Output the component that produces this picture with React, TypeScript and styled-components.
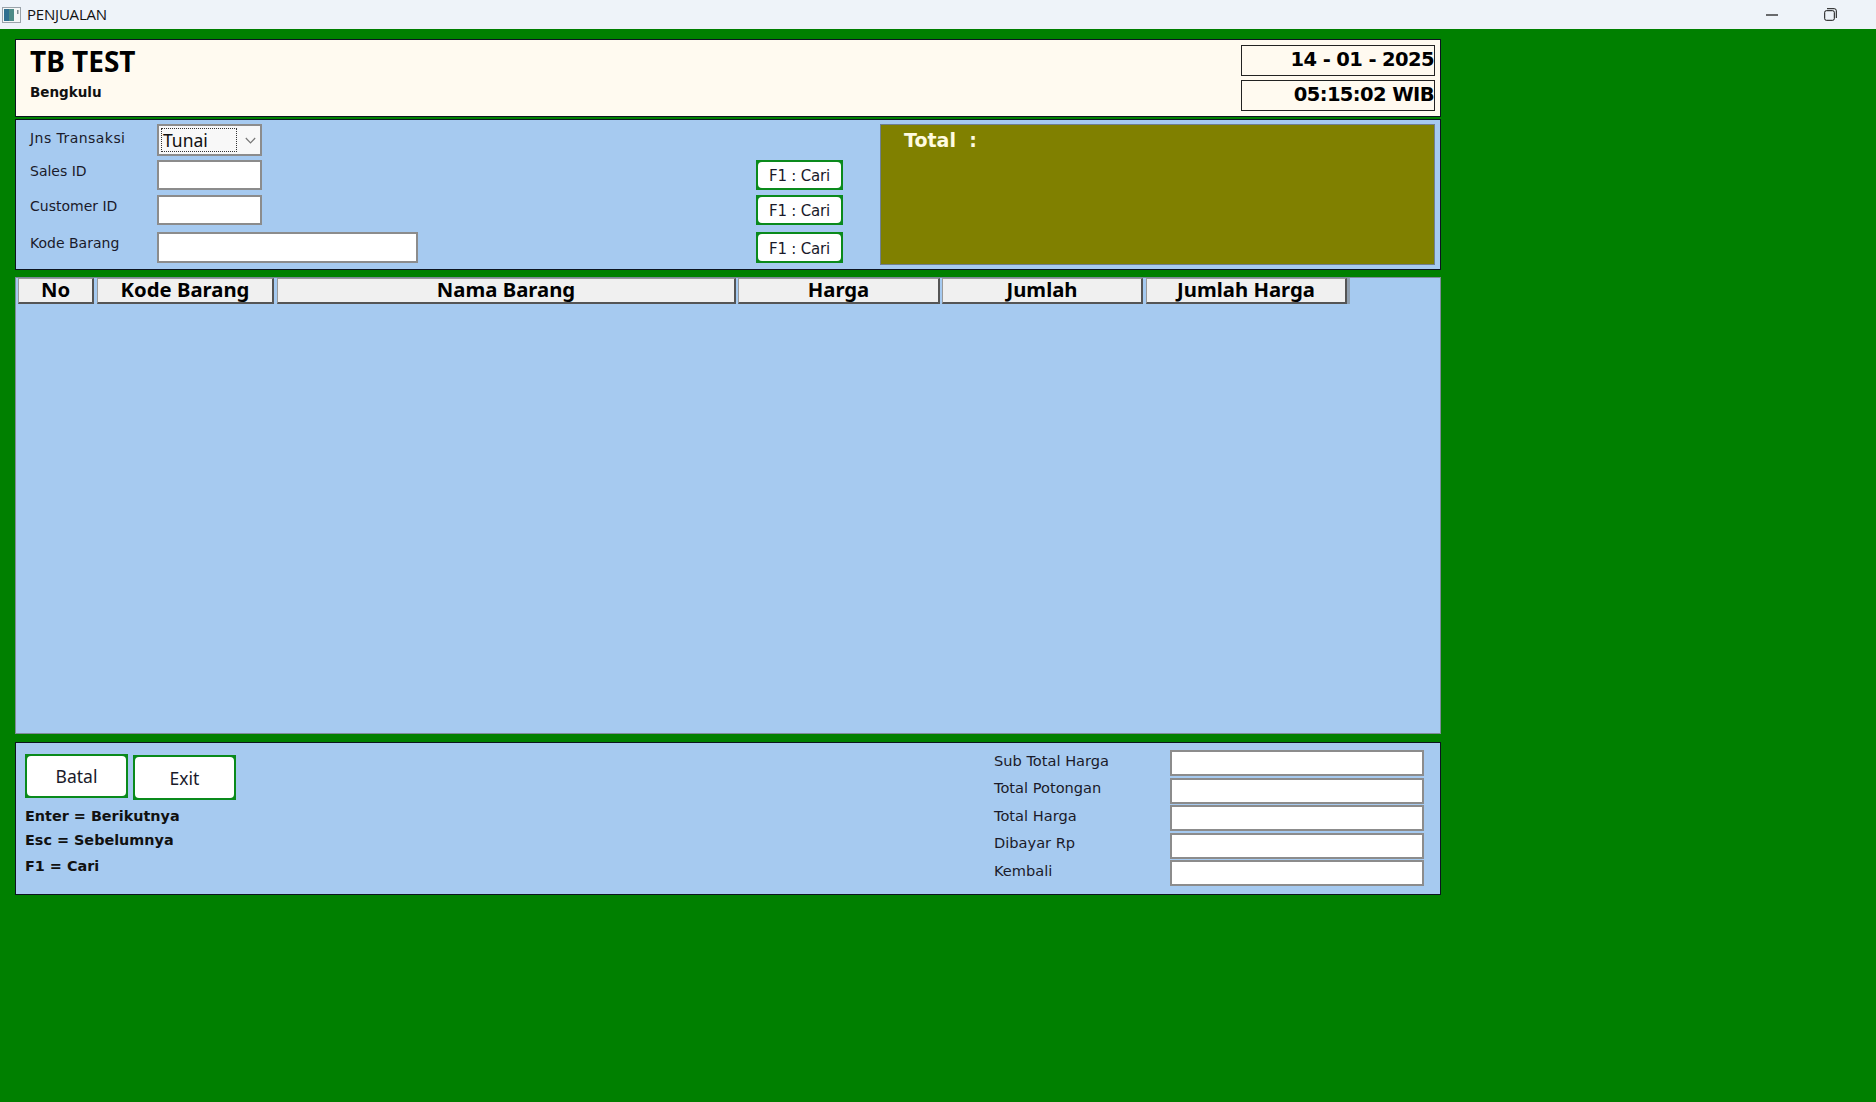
import React from "react";
import styled, { createGlobalStyle } from "styled-components";

const GREEN = "#008000";
const BLUE = "#a6caf0";
const UI = `"DejaVu Sans", Verdana, sans-serif`;

const Global = createGlobalStyle`
  html, body { margin: 0; padding: 0; height: 100%; }
  body { background: ${GREEN}; font-family: ${UI}; color: #111; overflow: hidden; }
  * { box-sizing: border-box; }
`;

const Page = styled.div`
  width: 1876px;
  height: 1102px;
  display: flex;
  flex-direction: column;
  background: ${GREEN};
`;

const TitleBar = styled.div`
  height: 29px;
  background: #eef3f9;
  display: flex;
  align-items: center;
  padding-left: 2px;
  flex: none;
`;

const TitleText = styled.span`
  font-family: "Open Sans", "Noto Sans", sans-serif;
  font-size: 15px;
  line-height: 20px;
  margin: 0 0 2px 6px;
  color: #111;
  letter-spacing: -0.2px;
`;

const WindowControls = styled.div`
  margin-left: auto;
  display: flex;
  align-items: center;
  gap: 46px;
  padding-right: 39px;
`;

const Content = styled.div`
  width: 1426px;
  margin-left: 15px;
  padding-top: 10px;
  display: flex;
  flex-direction: column;
`;

const Panel = styled.section<{ $h: number; $mt?: number; $bg?: string; $border?: string }>`
  height: ${(p) => p.$h}px;
  margin-top: ${(p) => p.$mt ?? 0}px;
  background: ${(p) => p.$bg ?? BLUE};
  border: 1px solid ${(p) => p.$border ?? "#0c1420"};
  display: flex;
`;

/* header */
const Brand = styled.div`
  padding: 3px 0 0 14px;
  flex: 1;
`;
const CompanyName = styled.div`
  font-family: "Noto Sans", sans-serif;
  font-weight: 700;
  font-size: 28px;
  line-height: 36px;
  color: #000;
`;
const CompanyCity = styled.div`
  font-weight: 700;
  font-size: 13.5px;
  line-height: 18px;
  margin-top: 4px;
  color: #111;
`;
const ClockColumn = styled.div`
  width: 194px;
  margin-right: 5px;
  padding-top: 5px;
  display: flex;
  flex-direction: column;
  gap: 4px;
`;
const ClockBox = styled.div`
  height: 31px;
  border: 1px solid #222;
  font-family: "DejaVu Sans", sans-serif;
  font-weight: 700;
  font-size: 19.5px;
  letter-spacing: -0.6px;
  display: flex;
  align-items: center;
  justify-content: flex-end;
  padding-bottom: 3px;
  color: #000;
  white-space: nowrap;
`;

/* form */
const Fields = styled.div`
  width: 827px;
  padding: 4px 0 0 14px;
  flex: none;
`;
const FieldRow = styled.div<{ $h: number; $mt?: number }>`
  height: ${(p) => p.$h}px;
  margin-top: ${(p) => p.$mt ?? 0}px;
  display: grid;
  grid-template-columns: 127px 599px 87px;
  align-items: stretch;
`;
const FieldLabel = styled.label<{ $pb?: number; $track?: number }>`
  font-size: 14px;
  letter-spacing: ${(p) => p.$track ?? 0}px;
  display: flex;
  align-items: center;
  padding-bottom: ${(p) => p.$pb ?? 6}px;
  color: #1a1a2a;
  white-space: nowrap;
`;
const TextBox = styled.input<{ $w: number }>`
  width: ${(p) => p.$w}px;
  height: 100%;
  background: #fff;
  border: 2px solid #8c8c8c;
  outline: none;
  padding: 0;
  display: block;
`;
const SelectBox = styled.div`
  width: 105px;
  height: 100%;
  background: #f8f8f8;
  border: 2px solid #8c8c8c;
  padding: 2px;
  display: flex;
  align-items: stretch;
`;
const SelectValue = styled.div`
  width: 76px;
  border: 1px dotted #333;
  font-size: 17.5px;
  font-family: "Noto Sans", sans-serif;
  line-height: 22px;
  padding-left: 1px;
  display: flex;
  align-items: center;
  color: #111;
`;
const SelectArrow = styled.div`
  flex: 1;
  display: flex;
  align-items: center;
  justify-content: center;
  padding-left: 6px;
`;
const GreenFrame = styled.button<{ $w: number; $h?: number; $mt?: number }>`
  width: ${(p) => p.$w}px;
  height: ${(p) => (p.$h ? `${p.$h}px` : "100%")};
  margin-top: ${(p) => p.$mt ?? 0}px;
  padding: 2px;
  border: 0;
  background: #0a8a1c;
  display: block;
  font-family: inherit;
`;
const ButtonFace = styled.span`
  width: 100%;
  height: 100%;
  background: #fff;
  border-radius: 4px;
  display: flex;
  align-items: center;
  justify-content: center;
  padding-top: 2px;
  font-size: 15px;
  letter-spacing: -0.2px;
  color: #1a1a2a;
`;
const ActionFace = styled(ButtonFace)`
  font-family: "Noto Sans", sans-serif;
  font-size: 17.5px;
  letter-spacing: 0;
  padding-top: 0;
`;
const TotalBox = styled.div`
  width: 555px;
  height: 141px;
  margin: 4px 0 0 37px;
  background: #808000;
  border: 1px solid #6f7f90;
  padding: 1px 0 0 23px;
  font-weight: 700;
  font-size: 19px;
  line-height: 28px;
  color: #fffbe0;
  white-space: pre;
`;

/* table */
const GridHeader = styled.div`
  display: flex;
  padding-left: 2px;
  height: 26px;
`;
const HeadCell = styled.div<{ $w: number; $mr: number }>`
  width: ${(p) => p.$w}px;
  margin-right: ${(p) => p.$mr}px;
  height: 26px;
  flex: none;
  background: #f0f0f0;
  border-top: 1px solid #9a9a9a;
  border-left: 1px solid #9a9a9a;
  border-right: 2px solid #555;
  border-bottom: 2px solid #555;
  font-family: "Noto Sans", sans-serif;
  font-weight: 700;
  font-size: 20.3px;
  line-height: 21px;
  text-align: center;
  color: #000;
  white-space: nowrap;
  &:last-child {
    box-shadow: 3px 0 0 #8f9fb0;
  }
`;

/* bottom */
const ActionColumn = styled.div`
  flex: 1;
  padding: 11px 0 0 9px;
`;
const ActionButtons = styled.div`
  display: flex;
  align-items: flex-start;
  gap: 5px;
`;
const Hint = styled.div<{ $mt: number }>`
  font-weight: 700;
  font-size: 14.4px;
  line-height: 20px;
  margin-top: ${(p) => p.$mt}px;
  color: #111;
  white-space: nowrap;
`;
const Summary = styled.div`
  padding: 7px 16px 0 0;
  display: flex;
  flex-direction: column;
  gap: 1.5px;
`;
const SummaryRow = styled.div`
  display: grid;
  grid-template-columns: 176px 254px;
  height: 26px;
`;
const SummaryLabel = styled(FieldLabel)`
  font-size: 14.6px;
  padding-bottom: 6px;
`;

const columns = [
  { label: "No", w: 76, mr: 3 },
  { label: "Kode Barang", w: 177, mr: 3 },
  { label: "Nama Barang", w: 459, mr: 2 },
  { label: "Harga", w: 202, mr: 2 },
  { label: "Jumlah", w: 201, mr: 3 },
  { label: "Jumlah Harga", w: 201, mr: 0 },
];

const summary = ["Sub Total Harga", "Total Potongan", "Total Harga", "Dibayar Rp", "Kembali"];

export default function App() {
  return (
    <Page>
      <Global />
      <TitleBar>
        <svg width="19" height="16" viewBox="0 0 19 16">
          <rect x="0.5" y="0.5" width="18" height="15" fill="#f4f6f6" stroke="#9aa3aa" />
          <rect x="2" y="2" width="10" height="12" fill="#4d8a86" />
          <rect x="2" y="2" width="5" height="12" fill="#2f6f8f" />
          <rect x="15" y="3" width="1.5" height="4" fill="#7c8a90" />
        </svg>
        <TitleText>PENJUALAN</TitleText>
        <WindowControls>
          <svg width="12" height="2" viewBox="0 0 12 2">
            <rect width="12" height="1.2" y="0.4" fill="#111" />
          </svg>
          <svg width="13" height="13" viewBox="0 0 13 13" fill="none" stroke="#111" strokeWidth="1">
            <rect x="0.7" y="2.7" width="9.6" height="9.6" rx="1.6" />
            <path d="M3 0.7h7.3a2 2 0 0 1 2 2V10" />
          </svg>
        </WindowControls>
      </TitleBar>
      <Content>
        <Panel $h={78} $bg="#fffaf0">
          <Brand>
            <CompanyName>TB TEST</CompanyName>
            <CompanyCity>Bengkulu</CompanyCity>
          </Brand>
          <ClockColumn>
            <ClockBox>14 - 01 - 2025</ClockBox>
            <ClockBox>05:15:02 WIB</ClockBox>
          </ClockColumn>
        </Panel>

        <Panel $h={151} $mt={2}>
          <Fields>
            <FieldRow $h={32}>
              <FieldLabel $pb={4} $track={0.45}>Jns Transaksi</FieldLabel>
              <SelectBox>
                <SelectValue>Tunai</SelectValue>
                <SelectArrow>
                  <svg width="11" height="7" viewBox="0 0 11 7" fill="none" stroke="#777" strokeWidth="1.2">
                    <path d="M0.8 1 L5.5 5.8 L10.2 1" />
                  </svg>
                </SelectArrow>
              </SelectBox>
            </FieldRow>
            <FieldRow $h={30} $mt={4}>
              <FieldLabel $pb={8}>Sales ID</FieldLabel>
              <TextBox $w={105} readOnly />
              <GreenFrame $w={87}>
                <ButtonFace>F1 : Cari</ButtonFace>
              </GreenFrame>
            </FieldRow>
            <FieldRow $h={30} $mt={5}>
              <FieldLabel $pb={8}>Customer ID</FieldLabel>
              <TextBox $w={105} readOnly />
              <GreenFrame $w={87}>
                <ButtonFace>F1 : Cari</ButtonFace>
              </GreenFrame>
            </FieldRow>
            <FieldRow $h={31} $mt={7}>
              <FieldLabel $pb={9}>Kode Barang</FieldLabel>
              <TextBox $w={261} readOnly />
              <GreenFrame $w={87}>
                <ButtonFace>F1 : Cari</ButtonFace>
              </GreenFrame>
            </FieldRow>
          </Fields>
          <TotalBox>{"Total  :"}</TotalBox>
        </Panel>

        <Panel $h={457} $mt={7} $border="#7d8b99">
          <GridHeader>
            {columns.map((c) => (
              <HeadCell key={c.label} $w={c.w} $mr={c.mr}>
                {c.label}
              </HeadCell>
            ))}
          </GridHeader>
        </Panel>

        <Panel $h={153} $mt={8}>
          <ActionColumn>
            <ActionButtons>
              <GreenFrame $w={103} $h={44}>
                <ActionFace>Batal</ActionFace>
              </GreenFrame>
              <GreenFrame $w={103} $h={45} $mt={1}>
                <ActionFace>Exit</ActionFace>
              </GreenFrame>
            </ActionButtons>
            <Hint $mt={6}>Enter = Berikutnya</Hint>
            <Hint $mt={4}>Esc = Sebelumnya</Hint>
            <Hint $mt={6}>F1 = Cari</Hint>
          </ActionColumn>
          <Summary>
            {summary.map((s) => (
              <SummaryRow key={s}>
                <SummaryLabel>{s}</SummaryLabel>
                <TextBox $w={254} readOnly />
              </SummaryRow>
            ))}
          </Summary>
        </Panel>
      </Content>
    </Page>
  );
}
